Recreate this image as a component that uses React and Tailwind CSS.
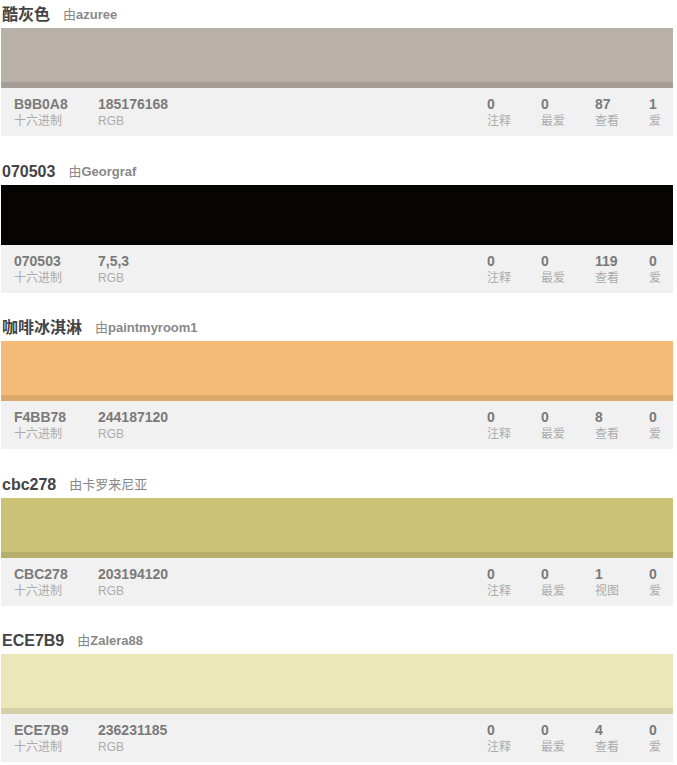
const palettes = [
  { title: '酷灰色', by: 'azuree', hex: 'B9B0A8', color: '#b9b0a8', rgb: '185176168', stats: [['0', '注释'], ['0', '最爱'], ['87', '查看'], ['1', '爱']] },
  { title: '070503', by: 'Georgraf', hex: '070503', color: '#070503', rgb: '7,5,3', stats: [['0', '注释'], ['0', '最爱'], ['119', '查看'], ['0', '爱']] },
  { title: '咖啡冰淇淋', by: 'paintmyroom1', hex: 'F4BB78', color: '#f4bb78', rgb: '244187120', stats: [['0', '注释'], ['0', '最爱'], ['8', '查看'], ['0', '爱']] },
  { title: 'cbc278', by: '卡罗来尼亚', cjk: true, hex: 'CBC278', color: '#cbc278', rgb: '203194120', stats: [['0', '注释'], ['0', '最爱'], ['1', '视图'], ['0', '爱']] },
  { title: 'ECE7B9', by: 'Zalera88', hex: 'ECE7B9', color: '#ece7b9', rgb: '236231185', stats: [['0', '注释'], ['0', '最爱'], ['4', '查看'], ['0', '爱']] },
];

function Stat({ value, label, className }) {
  return (
    <div className={className}>
      <div className="text-[14px] font-bold leading-4 text-[#7a7a7a]">{value}</div>
      <div className="mt-[1px] text-[12px] leading-4 text-[#acacac]">{label}</div>
    </div>
  );
}

function ColorCard({ p }) {
  return (
    <div className="flex flex-col">
      <div className="flex h-[26px] items-center gap-[13px] pl-[1px]">
        <span className="text-[16px] font-bold text-[#444]">{p.title}</span>
        <span className="text-[13px] text-[#888]">
          由<span className={p.cjk ? 'font-normal' : 'font-bold'}>{p.by}</span>
        </span>
      </div>
      <div className="flex h-[60px] flex-col" style={{ backgroundColor: p.color }}>
        <div className="flex-1" />
        <div className="h-[6px] bg-black/10" />
      </div>
      <div className="flex h-[48px] bg-[#f1f1f1] pl-[13px] pt-[8px]">
        <Stat value={p.hex} label="十六进制" className="w-[84px]" />
        <Stat value={p.rgb} label="RGB" className="w-[84px]" />
        <div className="ml-auto flex">
          {p.stats.map(([v, l], i) => (
            <Stat key={i} value={v} label={l} className={i === 3 ? 'w-[24px]' : 'w-[54px]'} />
          ))}
        </div>
      </div>
    </div>
  );
}

export default function App() {
  return (
    <div
      className="w-[673px] bg-white pl-[1px] pt-[2px]"
      style={{ fontFamily: '"Liberation Sans", Arial, "Noto Sans CJK SC", sans-serif' }}
    >
      <div className="flex flex-col gap-[22.5px]">
        {palettes.map((p) => (
          <ColorCard key={p.hex} p={p} />
        ))}
      </div>
    </div>
  );
}
